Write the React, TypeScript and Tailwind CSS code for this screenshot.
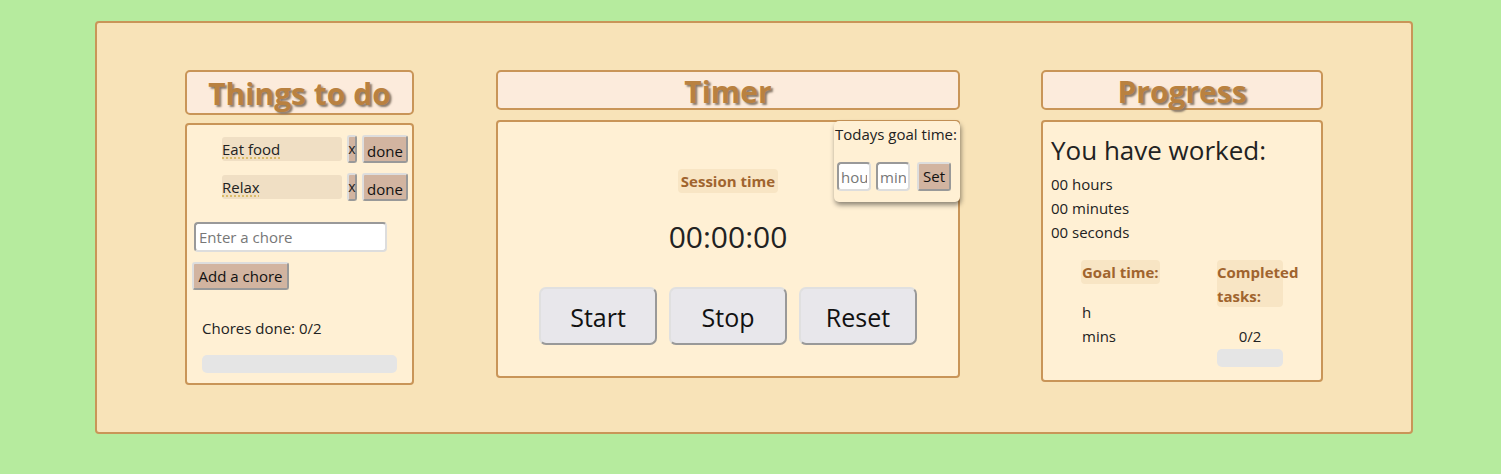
import React from "react";

const font = { fontFamily: '"Open Sans", "Noto Sans", sans-serif' };

function Title({ children }: { children: React.ReactNode }) {
  return (
    <span className="text-[30px] font-bold leading-none text-[#b98140] mt-[3px] [text-shadow:2px_2px_2px_#8a7a6a]">
      {children}
    </span>
  );
}

function Chore({ name }: { name: string }) {
  return (
    <div className="flex items-center h-[28px]">
      <div className="w-[120px] h-[24px] bg-[#f0dfc4] rounded-[3px] text-[15px] leading-[24px] text-[#222] flex items-center">
        <span className="underline decoration-dotted decoration-[#d4b04a] underline-offset-[3px]">{name}</span>
      </div>
      <button className="ml-[5px] w-[10px] h-[28px] bg-[#d2b4a0] border-2 border-[#ddd] border-r-[#999] border-b-[#999] rounded-[3px] text-[14px] leading-none flex items-center justify-center">
        x
      </button>
      <button className="ml-[5px] w-[46px] h-[28px] bg-[#d2b4a0] border-2 border-[#ddd] border-r-[#999] border-b-[#999] rounded-[3px] text-[15px] leading-none pt-[4px] text-[#111]">
        done
      </button>
    </div>
  );
}

export default function App() {
  return (
    <div className="w-[1501px] h-[474px] bg-[#b6eb9e] pt-[21px] pl-[95px]" style={font}>
      <div className="w-[1318px] h-[413px] bg-[#f8e3b8] border-2 border-[#c99558] rounded-[4px] flex pl-[88px] pt-[47px] items-start">
        {/* Left */}
        <div className="w-[229px] shrink-0 flex flex-col">
          <div className="h-[45px] bg-[#fcebdc] border-2 border-[#c99558] rounded-[5px] flex items-center justify-center">
            <Title>Things to do</Title>
          </div>
          <div className="mt-[8px] h-[262px] bg-[#fff0d4] border-2 border-[#c99558] rounded-[4px] flex flex-col text-[#222]">
            <div className="pl-[35px] pt-[10px] flex flex-col gap-[10px]">
              <Chore name="Eat food" />
              <Chore name="Relax" />
            </div>
            <input
              placeholder="Enter a chore"
              className="ml-[7px] mt-[21px] w-[193px] h-[30px] bg-white border-2 border-[#999] border-r-[#ddd] border-b-[#ddd] rounded-[4px] px-[3px] text-[15px] placeholder:text-[#777] outline-none"
            />
            <button className="ml-[5px] mt-[10px] w-[97px] h-[28px] bg-[#d2b4a0] border-2 border-[#ddd] border-r-[#999] border-b-[#999] rounded-[3px] text-[15px] leading-none text-[#111]">
              Add a chore
            </button>
            <div className="ml-[15px] mt-[28px] text-[15px] leading-[20px]">Chores done: 0/2</div>
            <div className="ml-[15px] mt-[17px] w-[195px] h-[18px] bg-[#e5e5e5] rounded-[5px]" />
          </div>
        </div>

        {/* Middle */}
        <div className="ml-[82px] w-[464px] shrink-0 flex flex-col">
          <div className="h-[40px] bg-[#fcebdc] border-2 border-[#c99558] rounded-[5px] flex items-center justify-center">
            <Title>Timer</Title>
          </div>
          <div className="relative mt-[10px] h-[258px] bg-[#fff0d4] border-2 border-[#c99558] rounded-[4px] flex flex-col items-center text-[#222]">
            <div className="mt-[47px] px-[3px] h-[24px] bg-[#f8e5c4] rounded-[4px] text-[15px] font-bold text-[#a0642e] leading-[24px]">
              Session time
            </div>
            <div className="mt-[24px] text-[30px] leading-[40px] text-[#222]">00:00:00</div>
            <div className="mt-[30px] flex gap-[12px]">
              {["Start", "Stop", "Reset"].map((t) => (
                <button
                  key={t}
                  className="w-[118px] h-[58px] bg-[#e8e7eb] border-2 border-[#e0e0e0] border-r-[#999] border-b-[#999] rounded-[7px] text-[25px] pt-[4px] text-[#111]"
                >
                  {t}
                </button>
              ))}
            </div>
            <div className="absolute right-[-2px] top-[-1px] w-[126px] h-[81px] bg-[#fff0d4] rounded-[5px] shadow-[1px_3px_5px_rgba(0,0,0,0.45)] flex flex-col">
              <div className="text-[15px] leading-[20px] pt-[3px] pl-[1px] whitespace-nowrap text-[#222]">Todays goal time:</div>
              <div className="flex items-center mt-[18px] pl-[3px]">
                <input
                  placeholder="hou"
                  className="w-[34px] h-[29px] bg-white border-2 border-[#999] border-r-[#ddd] border-b-[#ddd] rounded-[4px] px-[2px] text-[15px] placeholder:text-[#777] outline-none"
                />
                <input
                  placeholder="min"
                  className="ml-[5px] w-[34px] h-[29px] bg-white border-2 border-[#999] border-r-[#ddd] border-b-[#ddd] rounded-[4px] px-[2px] text-[15px] placeholder:text-[#777] outline-none"
                />
                <button className="ml-[7px] w-[34px] h-[29px] bg-[#d2b4a0] border-2 border-[#ddd] border-r-[#999] border-b-[#999] rounded-[3px] text-[15px] leading-none text-[#111]">
                  Set
                </button>
              </div>
            </div>
          </div>
        </div>

        {/* Right */}
        <div className="ml-[81px] w-[282px] shrink-0 flex flex-col">
          <div className="h-[40px] bg-[#fcebdc] border-2 border-[#c99558] rounded-[5px] flex items-center justify-center">
            <Title>Progress</Title>
          </div>
          <div className="mt-[10px] h-[262px] bg-[#fff0d4] border-2 border-[#c99558] rounded-[4px] flex flex-col text-[#222] pl-[8px]">
            <div className="mt-[11px] text-[26px] leading-[34px]">You have worked:</div>
            <div className="mt-[5px] text-[15px] leading-[24px]">
              <div>00 hours</div>
              <div>00 minutes</div>
              <div>00 seconds</div>
            </div>
            <div className="mt-[16px] flex">
              <div className="ml-[30px] w-[136px] flex flex-col">
                <div className="self-start h-[24px] px-[1px] bg-[#f8e5c4] rounded-[4px] text-[15px] font-bold text-[#a0642e] leading-[24px]">
                  Goal time:
                </div>
                <div className="mt-[16px] text-[15px] leading-[24px] pl-[1px]">h</div>
                <div className="text-[15px] leading-[24px] pl-[1px]">mins</div>
              </div>
              <div className="w-[66px] flex flex-col items-center">
                <div className="w-[66px] h-[47px] bg-[#f8e5c4] rounded-[4px] text-[15px] font-bold text-[#a0642e] leading-[24px]">
                  Completed tasks:
                </div>
                <div className="mt-[17px] text-[15px] leading-[24px]">0/2</div>
                <div className="mt-[1px] w-[66px] h-[18px] bg-[#e5e5e5] rounded-[5px]" />
              </div>
            </div>
          </div>
        </div>
      </div>
    </div>
  );
}
